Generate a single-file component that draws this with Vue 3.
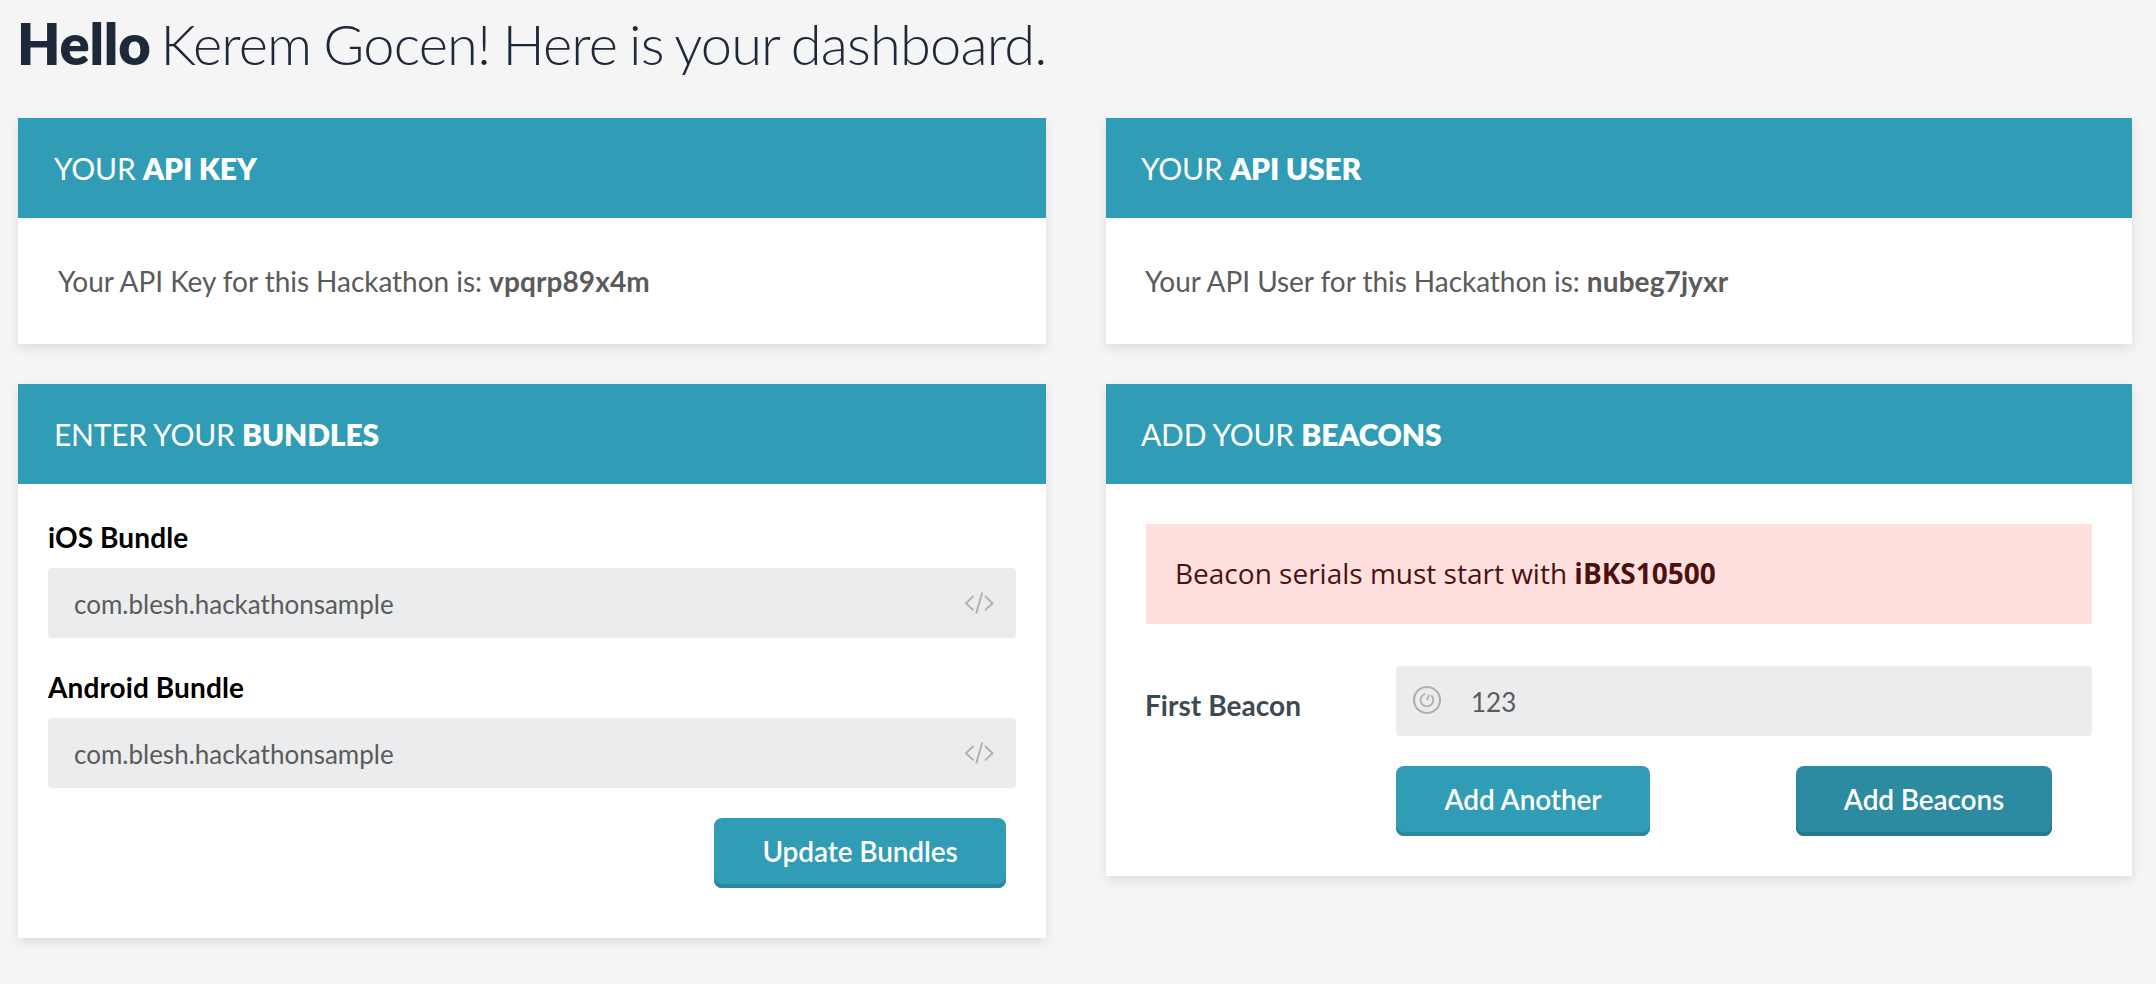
<script setup>
import { ref } from 'vue'

const keyCards = [
  { title: 'API KEY', label: 'Your API Key for this Hackathon is:', value: 'vpqrp89x4m' },
  { title: 'API USER', label: 'Your API User for this Hackathon is:', value: 'nubeg7jyxr' },
]
const bundles = ref([
  { id: 'ios', label: 'iOS Bundle', value: 'com.blesh.hackathonsample' },
  { id: 'android', label: 'Android Bundle', value: 'com.blesh.hackathonsample' },
])
const beacon = ref('123')
</script>

<template>
  <main class="page">
    <h1 class="hello"><b>Hello</b> Kerem Gocen! Here is your dashboard.</h1>
    <div class="grid">
      <section v-for="c in keyCards" :key="c.title" class="card">
        <h2 class="head">YOUR <b>{{ c.title }}</b></h2>
        <p class="key">{{ c.label }} <b>{{ c.value }}</b></p>
      </section>

      <section class="card">
        <h2 class="head">ENTER YOUR <b>BUNDLES</b></h2>
        <form class="bundles" @submit.prevent>
          <div v-for="b in bundles" :key="b.id" class="group">
            <label class="label" :for="b.id">{{ b.label }}</label>
            <div class="field">
              <input :id="b.id" v-model="b.value" type="text" />
              <svg class="code" width="30" height="24" viewBox="0 0 30 24" fill="none" stroke="#b1b1b2" stroke-width="2">
                <path d="M9.500 5 2 12.200l7.500 7.200M21 5l7.500 7.200L21 19.400M18.200 1.500l-6 21" />
              </svg>
            </div>
          </div>
          <button class="btn update">Update Bundles</button>
        </form>
      </section>

      <section class="card">
        <h2 class="head">ADD YOUR <b>BEACONS</b></h2>
        <form class="beacons" @submit.prevent>
          <p class="alert">Beacon serials must start with <b>iBKS10500</b></p>
          <div class="row">
            <label class="first" for="beacon">First Beacon</label>
            <div class="field serial">
              <svg class="dial" width="30" height="30" viewBox="0 0 30 30" fill="none" stroke="#b1b1b2">
                <circle cx="15" cy="15" r="13" stroke-width="2.200" />
                <path d="M13.200 8.800a6.400 6.400 0 1 0 6.100 1.500" stroke-width="1.900" />
                <path d="M15 15.200l2.100-5.700" stroke-width="1.700" />
              </svg>
              <input id="beacon" v-model="beacon" type="text" />
            </div>
          </div>
          <div class="actions">
            <button class="btn">Add Another</button>
            <button class="btn dark">Add Beacons</button>
          </div>
        </form>
      </section>
    </div>
  </main>
</template>

<style>
body {
  background: #f5f5f5;
}
</style>

<style scoped>
.page {
  box-sizing: border-box;
  width: 2156px;
  height: 984px;
  padding: 10px 24px 0 18px;
  overflow: hidden;
  font-family: Lato, "Open Sans", sans-serif;
  color: #5b5b5b;
}
.hello {
  margin: 0 0 40px -1px;
  font-size: 56px;
  line-height: 68px;
  font-weight: 300;
  letter-spacing: -0.84px;
  word-spacing: -2.4px;
  color: #1d2939;
  white-space: nowrap;
}
.hello b {
  margin-right: -2px;
  font-weight: 800;
  letter-spacing: -0.2px;
}
.grid {
  display: grid;
  grid-template-columns: 1028px 1026px;
  gap: 40px 60px;
  align-items: start;
}
.card {
  background: #fff;
  box-shadow: 0 4px 10px rgba(0, 0, 0, 0.1);
}
.head {
  margin: 0;
  padding-left: 36px;
  height: 100px;
  line-height: 100px;
  background: #309cb5;
  color: #fff;
  font-size: 30px;
  font-weight: 400;
  letter-spacing: -0.25px;
}
.head b {
  font-weight: 800;
  letter-spacing: -0.2px;
}
.card:nth-child(even) .head {
  padding-left: 35px;
}
.key {
  margin: 0;
  padding-left: 40px;
  line-height: 126px;
  font-size: 28px;
  letter-spacing: -0.04px;
}
.card:nth-child(even) .key {
  padding-left: 39px;
}
.key b {
  letter-spacing: 0.1px;
}
.bundles {
  display: flex;
  flex-direction: column;
  gap: 32px;
  padding: 36px 30px 50px;
}
.label {
  display: block;
  margin-bottom: 14px;
  font-size: 28px;
  line-height: 34px;
  font-weight: 700;
  letter-spacing: 0.1px;
  color: #000;
}
.field {
  display: flex;
  align-items: center;
  box-sizing: border-box;
  height: 70px;
  padding: 0 22px 0 26px;
  border-radius: 4px;
  background: #ebecee;
}
input {
  flex: 1;
  min-width: 0;
  height: 70px;
  box-sizing: border-box;
  padding: 2px 0 0;
  border: 0;
  outline: 0;
  background: none;
  color: #5b5b5b;
  font: 400 26px/68px Lato, "Open Sans", sans-serif;
}
.btn {
  box-sizing: border-box;
  height: 70px;
  width: 254px;
  padding: 0 0 4px;
  border: 0;
  border-radius: 8px;
  background: #309cb5;
  box-shadow: inset 0 -4px #2a889d;
  color: #fff;
  font: 600 28px/66px Lato, "Open Sans", sans-serif;
  letter-spacing: -0.12px;
}
.update {
  width: 292px;
  align-self: flex-end;
  margin: -2px 10px 0 0;
}
.dark {
  width: 256px;
  background: #2c8ba1;
  box-shadow: inset 0 -4px #26788b;
}
.beacons {
  padding: 40px;
}
.alert {
  margin: 0 0 42px;
  padding-left: 29px;
  height: 100px;
  line-height: 98px;
  background: #ffe0de;
  color: #4c110f;
  font-family: "Open Sans", sans-serif;
  font-size: 28px;
}
.row {
  display: flex;
}
.first {
  width: 251px;
  margin-left: -1px;
  font-size: 28px;
  font-weight: 700;
  line-height: 78px;
  height: 70px;
  letter-spacing: 0.05px;
  color: #3c4a52;
}
.serial {
  flex: 1;
  padding-left: 16px;
  gap: 29px;
}
.dial {
  margin-top: -2px;
}
.actions {
  display: flex;
  justify-content: space-between;
  padding: 30px 40px 0 250px;
}
</style>
